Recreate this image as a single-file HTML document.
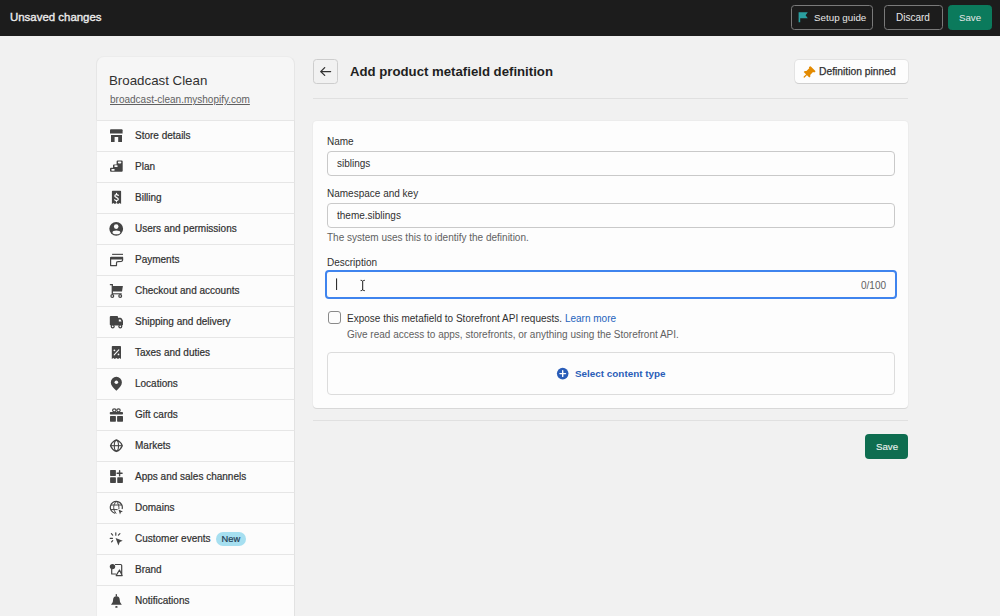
<!DOCTYPE html>
<html>
<head>
<meta charset="utf-8">
<style>
*{box-sizing:border-box;margin:0;padding:0}
html,body{width:1000px;height:616px;overflow:hidden}
body{background:#f1f1f1;font-family:"Liberation Sans",sans-serif;color:#303030;position:relative}
.abs{position:absolute;white-space:nowrap}
.topbar{position:absolute;left:0;top:0;width:1000px;height:36px;background:#1c1c1c}
.tbtn{position:absolute;top:5px;height:24.5px;border:1px solid #7a7a7a;border-radius:3.5px;color:#e8e8e8;font-size:10px;white-space:nowrap}
.tbtn span{position:absolute;top:6px}
.sb-head{position:absolute;left:96px;top:56px;width:199px;height:64px;background:#f6f6f6;border-left:1px solid #e6e6e6;border-right:1px solid #e6e6e6;border-top:1px solid #ececec;border-radius:8px 8px 0 0}
.nav{position:absolute;left:96px;top:120px;width:199px}
.item{position:relative;height:31px;background:#fcfcfc;border-top:1px solid #e6e6e6;border-left:1px solid #ececec;border-right:1px solid #e2e2e2}
.item .lbl{position:absolute;left:38px;top:9px;font-size:10px;color:#303030;white-space:nowrap;-webkit-text-stroke:0.2px #303030}
.card{position:absolute;left:313px;top:121px;width:595px;height:287px;background:#fdfdfd;border-radius:4px;box-shadow:0 1px 0 #d8d8d8,0 0 0 1px #ececec}
.lab{position:absolute;left:14px;font-size:10px;color:#303030;white-space:nowrap}
.inp{position:absolute;left:14px;width:568px;height:25px;border:1px solid #c9c9c9;border-radius:4px;background:#fdfdfd}
.inp span{position:absolute;left:9px;top:6px;font-size:10px;color:#303030;white-space:nowrap}
.help{position:absolute;left:14px;font-size:10px;color:#616161;white-space:nowrap}
</style>
</head>
<body>
<div class="topbar">
  <div class="abs" style="left:10px;top:11px;font-size:11.45px;color:#ececec;-webkit-text-stroke:0.35px #ececec">Unsaved changes</div>
  <div class="tbtn" style="left:791px;width:82px"><span style="left:22px;font-size:9.8px;top:6px">Setup guide</span></div>
  <div class="tbtn" style="left:884px;width:59px"><span style="left:11px">Discard</span></div>
  <div class="tbtn" style="left:948px;width:44px;background:#0b7a5c;border-color:#0b7a5c"><span style="left:10px;font-size:9.7px;top:6px">Save</span></div>
</div>

<div class="sb-head">
  <div class="abs" style="left:12px;top:16px;font-size:13.3px;color:#303030">Broadcast Clean</div>
  <div class="abs" style="left:13px;top:37px;font-size:10px;color:#616161;text-decoration:underline">broadcast-clean.myshopify.com</div>
</div>
<div class="nav">
  <div class="item"><div class="lbl">Store details</div></div>
  <div class="item"><div class="lbl">Plan</div></div>
  <div class="item"><div class="lbl">Billing</div></div>
  <div class="item"><div class="lbl">Users and permissions</div></div>
  <div class="item"><div class="lbl">Payments</div></div>
  <div class="item"><div class="lbl">Checkout and accounts</div></div>
  <div class="item"><div class="lbl">Shipping and delivery</div></div>
  <div class="item"><div class="lbl">Taxes and duties</div></div>
  <div class="item"><div class="lbl">Locations</div></div>
  <div class="item"><div class="lbl">Gift cards</div></div>
  <div class="item"><div class="lbl">Markets</div></div>
  <div class="item"><div class="lbl">Apps and sales channels</div></div>
  <div class="item"><div class="lbl">Domains</div></div>
  <div class="item"><div class="lbl">Customer events</div><div class="abs" style="left:119px;top:8px;width:30px;height:13.6px;border-radius:7px;background:#a6dff0"></div><div class="abs" style="left:124.5px;top:10px;font-size:9.3px;color:#1e3a52;-webkit-text-stroke:0.2px #1e3a52">New</div></div>
  <div class="item"><div class="lbl">Brand</div></div>
  <div class="item"><div class="lbl">Notifications</div></div>
</div>

<!-- main header -->
<div class="abs" style="left:313px;top:59px;width:25px;height:25px;border:1px solid #cdcdcd;border-radius:3.5px"></div>
<div class="abs" style="left:350px;top:64px;font-size:13.2px;font-weight:bold;color:#1f1f1f">Add product metafield definition</div>
<div class="abs" style="left:795px;top:60px;width:113px;height:23px;border-radius:4px;background:#fdfdfd;box-shadow:0 1px 0 #cfcfcf,0 0 0 1px #e3e3e3"></div>
<div class="abs" style="left:819px;top:66px;font-size:10.3px;color:#303030;-webkit-text-stroke:0.25px #303030">Definition pinned</div>
<div class="abs" style="left:313px;top:98px;width:595px;height:1px;background:#e0e0e0"></div>

<div class="card">
  <div class="lab" style="top:15px">Name</div>
  <div class="inp" style="top:30px"><span>siblings</span></div>
  <div class="lab" style="top:67px">Namespace and key</div>
  <div class="inp" style="top:82px"><span>theme.siblings</span></div>
  <div class="help" style="top:111px">The system uses this to identify the definition.</div>
  <div class="lab" style="top:136px">Description</div>
  <div class="inp" style="top:149px;left:12px;width:572px;height:29px;border:2px solid #3f84ee"></div>
  <div class="abs" style="left:548px;top:159px;font-size:10px;color:#616161">0/100</div>
  <div class="abs" style="left:15px;top:190px;width:13px;height:13px;border:1.3px solid #8a8a8a;border-radius:3px;background:#fdfdfd"></div>
  <div class="abs" style="left:34px;top:192px;font-size:10px;color:#303030">Expose this metafield to Storefront API requests. <span style="color:#2463bc">Learn more</span></div>
  <div class="abs" style="left:34px;top:208px;font-size:10px;color:#616161">Give read access to apps, storefronts, or anything using the Storefront API.</div>
  <div class="abs" style="left:14px;top:231px;width:568px;height:43px;border:1px solid #dcdcdc;border-radius:4px"></div>
  <div class="abs" style="left:262px;top:247px;font-size:9.9px;font-weight:bold;color:#2a5db8">Select content type</div>
</div>
<div class="abs" style="left:313px;top:420px;width:595px;height:1px;background:#e0e0e0"></div>
<div class="abs" style="left:865px;top:434px;width:43px;height:25px;border-radius:4px;background:#0e6d50"></div>
<div class="abs" style="left:876px;top:441px;font-size:9.7px;color:#e8f0ec;-webkit-text-stroke:0.15px #e8f0ec">Save</div>

<svg class="abs" style="left:0;top:0" width="1000" height="616" viewBox="0 0 1000 616">
 <g fill="#444">
  <!-- flag -->
  <path d="M798.6 12.3h9.2l-2.2 3 2.2 3h-7.6v4h-1.6z" fill="#2a9fa0"/>
  <!-- back arrow -->
  <path d="M330.6 71.6H321M324.7 67.6l-4 4 4 3.8" stroke="#303030" stroke-width="1.3" fill="none" stroke-linecap="round" stroke-linejoin="round"/>
  <!-- pin -->
  <path d="M810.6 66.2l5 5-1.3 1.2-1.3-.3-2.8 2.8.2 1.6-1.1 1.1-5.6-5.6 1.1-1.1 1.6.2 2.8-2.8-.3-1.3z" fill="#e38a00"/>
  <path d="M807.4 73.8l-3.2 3.2" stroke="#e38a00" stroke-width="1.2" stroke-linecap="round"/>
  <!-- plus circle -->
  <circle cx="562.7" cy="373.6" r="5.8" fill="#2a5db8"/>
  <path d="M562.7 370.8v5.6M559.9 373.6h5.6" stroke="#fdfdfd" stroke-width="1.4" stroke-linecap="round"/>
  <!-- text cursor + ibeam -->
  <rect x="336" y="278.4" width="1.1" height="11.6" fill="#303030"/>
  <path d="M360.6 280.3c1 0 1.6.3 2.1.9.5-.6 1.1-.9 2.1-.9M362.7 281.2v8.8M360.6 290.7c1 0 1.6-.3 2.1-.9.5.6 1.1.9 2.1.9" stroke="#1a1a1a" stroke-width="1" fill="none"/>

  <!-- 1 store -->
  <path d="M111 129.3h10.6q1 0 1 1v3.1h-12.6v-3.1q0-1 1-1z"/>
  <path d="M111 134.9h11v7h-3.8v-5h-3.6v5H111z"/>
  <!-- 2 plan -->
  <path d="M117.6 160.5h4.1q1 0 1 1v9.3q0 1-1 1H111q-1 0-1-1v-2q0-1 1-1h2v-2.4q0-1 1-1h2.6v-2.9q0-1 1-1z"/>
  <rect x="111.3" y="168.9" width="3.4" height="1.8" rx=".8" fill="#fcfcfc"/>
  <rect x="114.3" y="165.2" width="3.4" height="1.8" rx=".8" fill="#fcfcfc"/>
  <rect x="117.9" y="161.6" width="3.4" height="1.8" rx=".8" fill="#fcfcfc"/>
  <!-- 3 billing -->
  <path d="M112.7 190.7h7.6q.8 0 .8.8v12.6l-1.5-1-1.5 1-1.6-1-1.6 1-1.5-1-1.5 1V191.5q0-.8.8-.8z"/>
  <path d="M118.3 195.4C117.8 194.5 114.9 194.2 114.8 196C114.7 197.5 118.4 197.3 118.3 199.3C118.2 201 115.2 200.9 114.6 199.8M116.5 193.3V194.6M116.5 200.5V201.8" stroke="#fcfcfc" stroke-width="1.2" fill="none" stroke-linecap="round"/>
  <!-- 4 users -->
  <circle cx="116.2" cy="228.8" r="6.9"/>
  <circle cx="116.2" cy="226.6" r="2.3" fill="#fcfcfc"/>
  <ellipse cx="116.4" cy="232.4" rx="3.9" ry="1.8" fill="#fcfcfc"/>
  <!-- 5 payments -->
  <rect x="112.1" y="253.8" width="10.9" height="1.1"/>
  <path d="M111.4 256.7H123v2.8H110v-1.4q0-1.4 1.4-1.4z"/>
  <path d="M110.6 257.5v8.1h5.9v-2.6q0-1.2 1.2-1.3l3.7-.4q1.2-.2 1.2-1.4v-2.6" stroke="#444" stroke-width="1.2" fill="none" stroke-linejoin="round"/>
  <!-- 6 cart -->
  <path d="M110.4 284.7h1.9v9" stroke="#444" stroke-width="1.3" fill="none" stroke-linecap="round"/>
  <path d="M112.3 286h10.6l-.9 5.6h-9.7z"/>
  <path d="M112.3 293.8h9.4" stroke="#444" stroke-width="1.1"/>
  <circle cx="112.3" cy="296" r="1.4" stroke="#444" stroke-width="1.2" fill="none"/>
  <circle cx="120.2" cy="296" r="1.4" stroke="#444" stroke-width="1.2" fill="none"/>
  <!-- 7 truck -->
  <path d="M110.8 316.1h6.4q.8 0 .8.8v.9h2.3q1 0 1.6 1l1.1 2v3.9q0 .8-.8.8h-11.4q-1 0-1-1v-7.4q0-1 1-1z"/>
  <path d="M118.8 319.4h1.7l1 2.1h-2.7z" fill="#fcfcfc"/>
  <circle cx="112.7" cy="326.4" r="2"/><circle cx="112.7" cy="326.4" r=".8" fill="#fcfcfc"/>
  <circle cx="120.3" cy="326.4" r="2"/><circle cx="120.3" cy="326.4" r=".8" fill="#fcfcfc"/>
  <!-- 8 taxes -->
  <path d="M112.6 345.9h7.6q.8 0 .8.8v12.3l-1.5-1-1.5 1-1.6-1-1.6 1-1.5-1-1.5 1V346.7q0-.8.8-.8z"/>
  <path d="M114.2 354.8l4.6-5" stroke="#fcfcfc" stroke-width="1.1" stroke-linecap="round"/>
  <circle cx="114.4" cy="350.3" r=".9" fill="#fcfcfc"/><circle cx="118.5" cy="354.4" r=".9" fill="#fcfcfc"/>
  <!-- 9 location -->
  <path d="M116.35 390.7C113.6 388.1 110.8 385.6 110.8 382.4a5.55 5.55 0 0 1 11.1 0c0 3.2-2.8 5.7-5.55 8.3z"/>
  <circle cx="116.35" cy="382.3" r="1.8" fill="#fcfcfc"/>
  <!-- 10 gift -->
  <ellipse cx="114.3" cy="410.3" rx="1.7" ry="1.5" stroke="#444" stroke-width="1.2" fill="none"/>
  <ellipse cx="118.5" cy="410.3" rx="1.7" ry="1.5" stroke="#444" stroke-width="1.2" fill="none"/>
  <rect x="109.8" y="412" width="13.2" height="2.6" rx=".8"/>
  <rect x="110" y="415.9" width="5.9" height="5.8" rx=".6"/>
  <rect x="117.1" y="415.9" width="5.9" height="5.8" rx=".6"/>
  <!-- 11 markets -->
  <path d="M116.4 439.9Q120.6 441.5 122.3 445.7Q120.6 449.9 116.4 451.5Q112.2 449.9 110.5 445.7Q112.2 441.5 116.4 439.9Z" stroke="#444" stroke-width="1.25" fill="none" stroke-linejoin="round"/>
  <ellipse cx="116.4" cy="445.7" rx="2.1" ry="5.2" stroke="#444" stroke-width="1.1" fill="none"/>
  <path d="M110.8 445.7h11.2" stroke="#444" stroke-width="1.1"/>
  <!-- 12 apps -->
  <rect x="110.1" y="470.1" width="5.8" height="5.8" rx=".6"/>
  <rect x="110.1" y="477.3" width="5.8" height="5.6" rx=".6"/>
  <rect x="117.25" y="477.3" width="5.65" height="5.6" rx=".6"/>
  <path d="M117.1 473.3h5M119.6 470.8v5" stroke="#444" stroke-width="1.4" stroke-linecap="round"/>
  <!-- 13 domains -->
  <path d="M122.1 509A6 6 0 1 0 115.3 513.3" stroke="#444" stroke-width="1.2" fill="none"/>
  <path d="M116.3 501.4C114.6 503 113.7 505.2 113.7 507.4S114.6 511.8 116.3 513.4M116.3 501.4C118 503 118.9 505.2 118.9 507.4V509" stroke="#444" stroke-width="1" fill="none"/>
  <path d="M110.9 505h10.8M110.8 509.6h6.8" stroke="#444" stroke-width="1"/>
  <path d="M118.5 509.4l4.4 2.1-2 .8-.9 2.2z"/>
  <!-- 14 customer events -->
  <path d="M115.8 532.8v2.4M111.4 533.7l1.3 1.4M110.2 538.3h2.3M111.6 541.9l1.1-1.2M118.4 535.1l1.5-1.5" stroke="#444" stroke-width="1.2" stroke-linecap="round"/>
  <path d="M115.6 537.9l7.1 2.9-2.9 1.1-1.4 3.5z"/>
  <!-- 15 brand -->
  <path d="M115 564.5h5.6q1.1 0 1.1 1.1v10.1M111.7 569.1v4.9h4.2M115.8 575.6h6.4l-2.7-5.6-3.5 5.6" stroke="#444" stroke-width="1.2" fill="none" stroke-linejoin="round"/>
  <circle cx="112.5" cy="566.6" r="2.7"/>
  <!-- 16 bell -->
  <rect x="115.7" y="594" width="1.3" height="2.6" rx=".6"/>
  <path d="M116.4 596.2q3 0 3.3 3.3l.3 2.6 1.8 2.7h-10.8l1.8-2.7.3-2.6q.3-3.3 3.3-3.3z"/>
  <ellipse cx="116.4" cy="606.9" rx="1.2" ry=".9"/>
 </g>
</svg>
</body>
</html>
